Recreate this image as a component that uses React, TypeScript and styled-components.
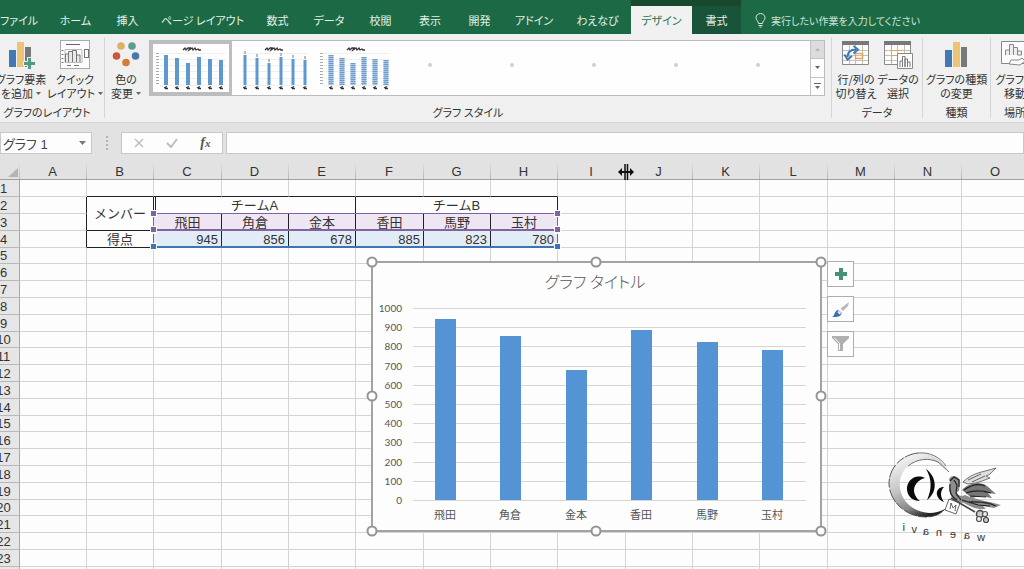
import React from "react";
import styled, { createGlobalStyle, css } from "styled-components";

const GlobalStyle = createGlobalStyle`
  *, *::before, *::after { box-sizing: border-box; }
  body {
    margin: 0;
    overflow: hidden;
    background: #fdfdfd;
    color: #333;
    font-family: "Noto Sans CJK JP", sans-serif;
    font-size: 11px;
  }
  button, input { font: inherit; color: inherit; border: 0; padding: 0; margin: 0; background: none; border-radius: 0; }
  svg { display: block; flex: none; }
`;

const Workbook = styled.div`
  display: flex;
  flex-direction: column;
  height: 100vh;
  overflow: hidden;
`;

/* ---------- tab strip ---------- */
const TabStrip = styled.nav`
  display: flex;
  flex: none;
  height: 34px;
  padding-right: 16px;
  background: #1c6a45;
  color: #e4f0e9;
  font-feature-settings: "palt";
  overflow: hidden;
`;

const Tab = styled.button<{ $w: number; $kind?: "active" | "context" }>`
  flex: none;
  width: ${(p) => p.$w}px;
  padding-top: 6px;
  line-height: 28px;
  white-space: nowrap;
  ${(p) => p.$kind === "context" && css`background: #19543a; border-top: 6px solid #18492f; padding-top: 0;`}
  ${(p) =>
    p.$kind === "active" &&
    css`background: #f1f1f1; color: #2a7350; border-top: 6px solid #18492f; padding-top: 0;`}
`;

const TellMe = styled.label`
  display: flex;
  flex: 1;
  align-items: center;
  gap: 5px;
  padding: 6px 0 0 14px;
`;

const TellMeInput = styled.input`
  flex: 1;
  min-width: 0;
  font-size: 10px;
  font-feature-settings: "palt";
  &::placeholder { color: #cfe3d8; opacity: 1; }
`;

/* ---------- ribbon ---------- */
const Ribbon = styled.section`
  display: flex;
  flex: none;
  height: 89px;
  padding: 4px 0;
  background: #f0f0f0;
  border-bottom: 1px solid #d2d2d2;
  font-feature-settings: "palt";
  overflow: hidden;
`;

const Group = styled.div<{ $w?: number; $first?: boolean }>`
  display: flex;
  flex-direction: column;
  flex: ${(p) => (p.$w ? "none" : "1 1 0")};
  width: ${(p) => (p.$w ? `${p.$w}px` : "auto")};
  min-width: 0;
  margin-left: ${(p) => (p.$first ? "-10px" : "0")};
  border-right: 1px solid #d4d4d4;
  &:last-child { border-right: 0; }
`;

const GroupBody = styled.div<{ $start?: boolean }>`
  display: flex;
  flex: 1;
  justify-content: ${(p) => (p.$start ? "flex-start" : "center")};
`;

const GroupLabel = styled.div<{ $w?: number }>`
  width: ${(p) => (p.$w ? `${p.$w}px` : "auto")};
  height: 12px;
  line-height: 12px;
  text-align: center;
  white-space: nowrap;
`;

const Command = styled.button<{ $w: number }>`
  display: flex;
  flex: none;
  flex-direction: column;
  align-items: center;
  width: ${(p) => p.$w}px;
  padding-top: 2px;
  line-height: 14px;
  white-space: nowrap;
`;

const CommandIcon = styled.span`
  display: block;
  height: 32px;
`;

const Line = styled.span`
  display: flex;
  align-items: center;
  gap: 3px;
`;

const Gallery = styled.div`
  display: flex;
  flex: 1;
  min-width: 0;
  height: 56px;
  margin: 2px 6px 0 2px;
  background: #fefefe;
  border: 1px solid #bcbcbc;
`;

const GalleryItems = styled.div`
  display: flex;
  flex: 1;
  min-width: 0;
  overflow: hidden;
`;

const StyleButton = styled.button<{ $selected?: boolean }>`
  flex: none;
  width: 82px;
  outline: ${(p) => (p.$selected ? "3px solid #bdbdbd" : "0")};
  outline-offset: -3px;
`;

const GalleryScroll = styled.div`
  display: flex;
  flex-direction: column;
  width: 14px;
  border-left: 1px solid #c4c4c4;
`;

const ScrollButton = styled.button<{ $off?: boolean }>`
  display: grid;
  flex: 1;
  place-items: center;
  background: ${(p) => (p.$off ? "#dcdcdc" : "#fefefe")};
  & + & { border-top: 1px solid #c4c4c4; }
`;

/* ---------- formula bar ---------- */
const FormulaBar = styled.div`
  display: flex;
  flex: none;
  align-items: flex-end;
  height: 31px;
  background: #e2e2e2;
`;

const Box = styled.div<{ $w?: number }>`
  display: flex;
  align-items: center;
  flex: ${(p) => (p.$w ? "none" : "1")};
  width: ${(p) => (p.$w ? `${p.$w}px` : "auto")};
  height: 22px;
  background: #fdfdfd;
  border: 1px solid #c8c8c8;
`;

const NameInput = styled.input`
  flex: 1;
  min-width: 0;
  padding-left: 2px;
  font-family: "Liberation Sans", "Noto Sans CJK JP", sans-serif;
  font-size: 13px;
  font-feature-settings: "palt";
  color: #444;
`;

const FormulaInput = styled.input`
  flex: 1;
  min-width: 0;
  padding: 0 4px;
`;

const DropButton = styled.button`
  display: grid;
  place-items: center;
  width: 18px;
  height: 20px;
`;

const Grip = styled.div`
  display: flex;
  flex-direction: column;
  align-items: center;
  justify-content: center;
  gap: 2px;
  width: 29px;
  height: 22px;
  i { width: 2px; height: 2px; background: #b4b4b4; }
`;

const BarButton = styled.button`
  display: grid;
  flex: 1;
  place-items: center;
  height: 20px;
`;

const Fx = styled.em`
  font: italic bold 14px/16px "Liberation Serif", serif;
  color: #555;
  small { font-size: 11px; }
`;

const Gap = styled.div`
  width: 3px;
`;

/* ---------- sheet ---------- */
const SheetArea = styled.main`
  position: relative;
  flex: 1;
  min-height: 0;
  overflow: hidden;
  background: #fdfdfd;
`;

const Sheet = styled.table`
  width: max-content;
  margin-left: -10px;
  border-collapse: separate;
  border-spacing: 0;
  font-family: "Liberation Sans", "Noto Sans CJK JP", sans-serif;
  font-size: 13px;
  line-height: 15px;
`;

const HeadCell = styled.th<{ $w: number }>`
  min-width: ${(p) => p.$w}px;
  height: 26px;
  padding: 11px 2px 0 0;
  background: linear-gradient(to bottom, #e2e2e2 0, #e2e2e2 8px, #b4b4b4 26px) right / 1px 100% no-repeat #e2e2e2;
  border-bottom: 1px solid #a0a0a0;
  font-weight: normal;
  line-height: 14px;
`;

const CornerMark = styled.svg`
  margin-left: auto;
`;

const Row = styled.tr`
  height: 17px;
  &:nth-child(5n) { height: 16px; }
`;

const RowHead = styled.th`
  padding: 1px 2px 0 0;
  background: #e6e6e6;
  border-right: 1px solid #a8a8a8;
  border-bottom: 1px solid #b8b8b8;
  font-weight: normal;
  line-height: 14px;
`;

const Cell = styled.td<{ $right?: boolean; $bottom?: boolean; $left?: boolean; $fill?: string; $num?: boolean }>`
  padding: ${(p) => (p.$num ? "1px 3px 0 0" : "1px 0 0")};
  line-height: 14px;
  text-align: ${(p) => (p.$num ? "right" : "center")};
  background: ${(p) => p.$fill || "transparent"};
  border: 0 solid #d4d4d4;
  border-width: 0 1px 1px 0;
  ${(p) => p.$right && css`border-right-color: #222;`}
  ${(p) => p.$bottom && css`border-bottom-color: #222;`}
  ${(p) => p.$left && css`box-shadow: inset 1px 0 #fdfdfd, inset 2px 0 #222;`}
`;

/* Coloured outlines that mark the source ranges of the chart. */
const Range = styled.div<{ $color: string; $top: number }>`
  position: absolute;
  left: 153px;
  top: ${(p) => p.$top}px;
  width: 405px;
  height: 18px;
  border: 1px solid ${(p) => p.$color};
  border-bottom-width: 2px;
  pointer-events: none;
  i {
    position: absolute;
    width: 5px;
    height: 5px;
    background: ${(p) => p.$color};
    outline: 1px solid #fdfdfd;
  }
  i:nth-child(1) { left: -3px; top: -3px; }
  i:nth-child(2) { right: -3px; top: -3px; }
  i:nth-child(3) { left: -3px; bottom: -3px; }
  i:nth-child(4) { right: -3px; bottom: -3px; }
`;

const ChartObject = styled.figure`
  position: absolute;
  left: 372px;
  top: 108px;
  margin: 0;
  svg { overflow: visible; }
`;

const ChartTools = styled.div`
  position: absolute;
  left: 827px;
  top: 107px;
  display: flex;
  flex-direction: column;
  gap: 9px;
`;

const ToolButton = styled.button`
  display: grid;
  place-items: center;
  width: 27px;
  height: 26px;
  background: #fdfdfd;
  border: 1px solid #adadad;
`;

const ResizeCursor = styled.svg`
  position: absolute;
  left: 618px;
  top: 10px;
`;

const Watermark = styled.svg`
  position: absolute;
  left: 884px;
  top: 294px;
`;

/* ---------- icons ---------- */
const Down = ({ color = "#666" }: { color?: string }) => (
  <svg width="5" height="3" viewBox="0 0 5 3"><path d="M0 0h5L2.500 3z" fill={color} /></svg>
);

const Columns = ({ plus }: { plus?: boolean }) => (
  <svg width="28" height="30" viewBox="0 0 28 30">
    <rect x="2" y="10" width="7" height="17" fill="#4179b4" />
    <rect x="10" y="2" width="7" height="25" fill="#edc376" />
    <rect x="18" y="7" width="6" height="20" fill="#787878" />
    {plus && (
      <path d="M20.500 17.500h4v4h4v4h-4v4h-4v-4h-4v-4h4z" fill="#4f9c86" stroke="#f0f0f0" strokeWidth="1" />
    )}
  </svg>
);

const QuickLayout = () => (
  <svg width="30" height="30" viewBox="0 0 30 30" fill="none" stroke="#777">
    <rect x=".5" y=".5" width="29" height="28" fill="#fcfcfc" stroke="#aaa" />
    <path d="M6 4.500h14" stroke="#666" />
    <path d="M2.500 10v13" strokeDasharray="1 3" strokeWidth="2" />
    <path d="M7 25.500h4M14 25.500h5" />
    <path d="M5 9.500h17v13H5z" stroke="#bbb" />
    <path d="M5.500 22v-8h3v8M8.500 22V11.500h4V22M12.500 22V10.500h4V22M16.500 22v-7h3.500v7" fill="#e9e9e9" />
    <rect x="24.500" y="9.500" width="4" height="8" />
  </svg>
);

const Palette = () => (
  <svg width="28" height="30" viewBox="0 0 28 30">
    <circle cx="9" cy="6" r="3.800" fill="#dfae6a" />
    <circle cx="20" cy="6" r="3.800" fill="#5d9d8d" />
    <circle cx="4.500" cy="16" r="3.800" fill="#c9593a" />
    <circle cx="23.500" cy="16" r="3.800" fill="#4f76a9" />
    <circle cx="14" cy="22.500" r="3.800" fill="#d67a35" />
  </svg>
);

const SheetGrid = ({ children }: { children: React.ReactNode }) => (
  <svg width="30" height="30" viewBox="0 0 30 30" fill="none">
    <path d="M1.500 1.500h26v23h-26z" fill="#fdfdfd" stroke="#8a8a8a" />
    <path d="M1 1h27v4H1z" fill="#777" />
    <path d="M2 10.500h25M2 15.500h25M2 20.500h25M8.500 5v19M14.500 5v19M21.500 5v19" stroke="#c8bfb2" />
    {children}
  </svg>
);

const SwitchRows = () => (
  <SheetGrid>
    <path d="M14.500 13.500h7v5h-7z" stroke="#dda866" strokeWidth="1.500" />
    <path d="M6.500 17C6.500 11.500 10 9.500 15 9.500" stroke="#3d78b8" strokeWidth="2" />
    <path d="M12.500 6l4.500 3.500-4.500 4M3.500 14.500l3 5 4.500-3.500" stroke="#3d78b8" strokeWidth="2" />
  </SheetGrid>
);

const SelectData = () => (
  <SheetGrid>
    <path d="M8.500 5v18M8.500 10.500h13M8.500 15.500h13" stroke="#dda866" />
    <path d="M14.500 13.500h15v15h-15z" fill="#fdfdfd" stroke="#888" />
    <path d="M17 27v-6h2.500v6M19.500 27V16.500H22V27M22 27v-8h2.500v8M24.500 27v-5H27v5" stroke="#777" />
  </SheetGrid>
);

const MoveChart = () => (
  <svg width="30" height="30" viewBox="0 0 30 30" fill="none" stroke="#888">
    <path d="M1.500 1.500h28v22h-28z" fill="#fdfdfd" />
    <path d="M5.500 15v-5h4v5M9.500 15V4.500h4V15M13.500 15V7.500h4V15M17.500 15v-4h4v4z" fill="#ececec" />
    <path d="M9 24l2-4h8l3-2 3 3-5 4z" fill="#fdfdfd" />
  </svg>
);

const thumbValues = [945, 856, 678, 885, 823, 780];

const Thumb = ({ kind }: { kind: "solid" | "thin" | "striped" | "dot" }) => {
  if (kind === "dot") {
    return <svg width="82" height="54"><circle cx="34" cy="24" r="2" fill="#cfcfcf" /></svg>;
  }
  const w = kind === "solid" ? 4 : kind === "thin" ? 3 : 5;
  const first = kind === "thin" ? 13 : kind === "striped" ? 17 : 16;
  const pitch = kind === "thin" ? 12 : 11;
  return (
    <svg width="82" height="54" viewBox="0 0 82 54">
      <path d="M10 12.500h66M10 18.500h66M10 24.500h66M10 30.500h66M10 37.500h66M10 44.500h66" stroke="#efefef" />
      {kind !== "thin" && <path d="M7.500 12v33" stroke="#aaa" strokeWidth="3" strokeDasharray="1 2" />}
      <path d="M33 9l2-2 1 2 2-2h2l-1 2 3-2 1 2 2-2 1 2 2-1 1 1h2" fill="none" stroke="#333" strokeWidth="1.300" />
      {thumbValues.map((v, i) => {
        const x = first + i * pitch;
        const h = Math.round(v * 0.032);
        return (
          <g key={i}>
            <rect x={x - w / 2} y={44 - h} width={w} height={h} fill={kind === "striped" ? "#a9c6e4" : "#5f97cf"} />
            {kind === "striped" && (
              <path d={`M${x} ${44 - h}v${h}`} stroke="#6f9cc9" strokeWidth={w} strokeDasharray="1 1" />
            )}
            {kind === "thin" && <path d={`M${x} ${40 - h}v3`} stroke="#777" />}
            <path d={`M${x - 2} 47l3-1.500M${x - 1} 47.500h3`} stroke="#333" strokeWidth="1.300" />
          </g>
        );
      })}
    </svg>
  );
};

/* ---------- chart ---------- */
const data = [
  { name: "飛田", value: 945 },
  { name: "角倉", value: 856 },
  { name: "金本", value: 678 },
  { name: "香田", value: 885 },
  { name: "馬野", value: 823 },
  { name: "玉村", value: 780 },
];

const plot = { left: 41, right: 434, top: 46, bottom: 238 };
const yOf = (v: number) => Math.round(plot.bottom - (v / 1000) * (plot.bottom - plot.top));
const step = (plot.right - plot.left) / data.length;

const ChartText = styled.text<{ $size: number }>`
  font-family: Lato, "Noto Sans CJK JP", sans-serif;
  font-size: ${(p) => p.$size}px;
  fill: #555;
`;

const TitleText = styled(ChartText)`
  font-family: "Noto Sans CJK JP", sans-serif;
  font-weight: 300;
  font-feature-settings: "palt";
`;

const Chart = () => (
  <svg width="449" height="269" role="img" aria-label="グラフ タイトル">
    <rect x="0" y="0" width="449" height="269" fill="#fdfdfd" stroke="#a3a3a3" strokeWidth="2" />
    <TitleText $size={16} x="223" y="26" textAnchor="middle">グラフ タイトル</TitleText>
    {Array.from({ length: 11 }, (_, i) => i * 100).map((v) => (
      <g key={v}>
        <path d={`M${plot.left} ${yOf(v)}.5H${plot.right}`} stroke="#d6d6d6" />
        <ChartText $size={10} x="30" y={yOf(v) + 4} textAnchor="end">{v}</ChartText>
      </g>
    ))}
    {data.map((d, i) => {
      const x = Math.round(plot.left + step * (i + 0.5));
      return (
        <g key={d.name}>
          <rect x={x - 11} y={yOf(d.value)} width="21" height={plot.bottom - yOf(d.value)} fill="#5494d5" />
          <ChartText $size={11} x={x - 1} y="257" textAnchor="middle">{d.name}</ChartText>
        </g>
      );
    })}
    {[0, 134, 269].map((y) =>
      [0, 224, 449].map((x) =>
        x === 224 && y === 134 ? null : (
          <circle key={`${x}-${y}`} cx={x} cy={y} r="4.500" fill="#fdfdfd" stroke="#949494" strokeWidth="2" />
        )
      )
    )}
  </svg>
);

/* ---------- sheet contents ---------- */
const letters = "ABCDEFGHIJKLMNO".split("");
const purple = "#efe6f4";
const blue = "#e2ecf6";

const Blank = ({ from, to, bottom }: { from: number; to: number; bottom?: boolean }) => (
  <>
    {letters.slice(from, to).map((l) => (
      <Cell key={l} $bottom={bottom} />
    ))}
  </>
);

const rowCells = (n: number) => {
  switch (n) {
    case 1:
      return (<><Blank from={0} to={1} /><Blank from={1} to={8} bottom /><Blank from={8} to={15} /></>);
    case 2:
      return (
        <>
          <Cell $right />
          <Cell rowSpan={2} $right $bottom>メンバー</Cell>
          <Cell colSpan={3} $left $right $bottom>チームA</Cell>
          <Cell colSpan={3} $right $bottom>チームB</Cell>
          <Blank from={8} to={15} />
        </>
      );
    case 3:
      return (
        <>
          <Cell $right />
          {data.map((d) => <Cell key={d.name} $right $bottom $fill={purple}>{d.name}</Cell>)}
          <Blank from={8} to={15} />
        </>
      );
    case 4:
      return (
        <>
          <Cell $right />
          <Cell $right $bottom>得点</Cell>
          {data.map((d) => <Cell key={d.name} $right $bottom $num $fill={blue}>{d.value}</Cell>)}
          <Blank from={8} to={15} />
        </>
      );
    default:
      return <Blank from={0} to={15} />;
  }
};

const tabs: [string, number, ("active" | "context")?][] = [
  ["ファイル", 48], ["ホーム", 55], ["挿入", 49], ["ページ レイアウト", 101], ["数式", 49],
  ["データ", 54], ["校閲", 49], ["表示", 50], ["開発", 49], ["アドイン", 60], ["わえなび", 67],
  ["デザイン", 61, "active"], ["書式", 49, "context"],
];

const FileTab = styled(Tab)`
  padding-right: 10px;
`;

export default function App() {
  return (
    <Workbook>
      <GlobalStyle />
      <TabStrip>
        {tabs.map(([name, w, kind], i) =>
          i === 0 ? <FileTab key={name} $w={w}>{name}</FileTab> : <Tab key={name} $w={w} $kind={kind}>{name}</Tab>
        )}
        <TellMe>
          <svg width="11" height="15" viewBox="0 0 11 15" fill="none" stroke="#d5e6dc">
            <path d="M3.500 10.500C3.500 8 1 7.500 1 4.800a4.500 4.300 0 0 1 9 0C10 7.500 7.500 8 7.500 10.500zM3.500 12.500h4M4.500 14h2" />
          </svg>
          <TellMeInput aria-label="操作アシスト" placeholder="実行したい作業を入力してください" />
        </TellMe>
      </TabStrip>

      <Ribbon>
        <Group $w={115} $first>
          <GroupBody>
            <Command $w={56}><CommandIcon><Columns plus /></CommandIcon><Line>グラフ要素</Line><Line>を追加<Down /></Line></Command>
            <Command $w={52}><CommandIcon><QuickLayout /></CommandIcon><Line>クイック</Line><Line>レイアウト<Down /></Line></Command>
          </GroupBody>
          <GroupLabel>グラフのレイアウト</GroupLabel>
        </Group>
        <Group>
          <GroupBody>
            <Command $w={42}><CommandIcon><Palette /></CommandIcon><Line>色の</Line><Line>変更<Down /></Line></Command>
            <Gallery>
              <GalleryItems>
                <StyleButton $selected aria-label="スタイル 1"><Thumb kind="solid" /></StyleButton>
                <StyleButton aria-label="スタイル 2"><Thumb kind="thin" /></StyleButton>
                <StyleButton aria-label="スタイル 3"><Thumb kind="striped" /></StyleButton>
                {[4, 5, 6, 7, 8].map((n) => (
                  <StyleButton key={n} aria-label={`スタイル ${n}`}><Thumb kind="dot" /></StyleButton>
                ))}
              </GalleryItems>
              <GalleryScroll>
                <ScrollButton $off aria-label="上へ"><svg width="5" height="3"><path d="M0 3h5L2.500 0z" fill="#b5b5b5" /></svg></ScrollButton>
                <ScrollButton aria-label="下へ"><Down /></ScrollButton>
                <ScrollButton aria-label="その他"><svg width="7" height="6"><path d="M0 .5h7" stroke="#666" /><path d="M1 3h5L3.500 6z" fill="#666" /></svg></ScrollButton>
              </GalleryScroll>
            </Gallery>
          </GroupBody>
          <GroupLabel>グラフ スタイル</GroupLabel>
        </Group>
        <Group $w={91}>
          <GroupBody>
            <Command $w={42}><CommandIcon><SwitchRows /></CommandIcon><Line>行/列の</Line><Line>切り替え</Line></Command>
            <Command $w={42}><CommandIcon><SelectData /></CommandIcon><Line>データの</Line><Line>選択</Line></Command>
          </GroupBody>
          <GroupLabel>データ</GroupLabel>
        </Group>
        <Group $w={68}>
          <GroupBody>
            <Command $w={60}><CommandIcon><Columns /></CommandIcon><Line>グラフの種類</Line><Line>の変更</Line></Command>
          </GroupBody>
          <GroupLabel>種類</GroupLabel>
        </Group>
        <Group $w={33}>
          <GroupBody $start>
            <Command $w={48}><CommandIcon><MoveChart /></CommandIcon><Line>グラフの</Line><Line>移動</Line></Command>
          </GroupBody>
          <GroupLabel $w={48}>場所</GroupLabel>
        </Group>
      </Ribbon>

      <FormulaBar>
        <Box $w={92}>
          <NameInput aria-label="名前ボックス" defaultValue="グラフ 1" />
          <DropButton aria-label="名前の一覧"><svg width="7" height="4"><path d="M0 0h7L3.500 4z" fill="#777" /></svg></DropButton>
        </Box>
        <Grip><i /><i /><i /><i /></Grip>
        <Box $w={102}>
          <BarButton aria-label="キャンセル"><svg width="10" height="10"><path d="M1 1l8 8M9 1L1 9" stroke="#bdbdbd" strokeWidth="1.500" /></svg></BarButton>
          <BarButton aria-label="入力"><svg width="12" height="10"><path d="M1 5l4 4 6-8" fill="none" stroke="#bdbdbd" strokeWidth="2" /></svg></BarButton>
          <BarButton aria-label="関数の挿入"><Fx>f<small>x</small></Fx></BarButton>
        </Box>
        <Gap />
        <Box><FormulaInput aria-label="数式バー" /></Box>
      </FormulaBar>

      <SheetArea>
        <Sheet>
          <thead>
            <tr>
              <HeadCell $w={30}><CornerMark width="10" height="9"><path d="M10 0v9H0z" fill="#b5b5b5" /></CornerMark></HeadCell>
              {letters.map((l, i) => <HeadCell key={l} $w={i % 3 === 2 ? 68 : 67}>{l}</HeadCell>)}
            </tr>
          </thead>
          <tbody>
            {Array.from({ length: 24 }, (_, i) => i + 1).map((n) => (
              <Row key={n}><RowHead>{n}</RowHead>{rowCells(n)}</Row>
            ))}
          </tbody>
        </Sheet>

        <Range $color="#3f73b5" $top={76}><i /><i /><i /><i /></Range>
        <Range $color="#8064a2" $top={59}><i /><i /><i /><i /></Range>

        <ChartObject><Chart /></ChartObject>
        <ChartTools>
          <ToolButton aria-label="グラフ要素">
            <svg width="14" height="14"><path d="M5 1h4v4h4v4H9v4H5V9H1V5h4z" fill="#459079" /></svg>
          </ToolButton>
          <ToolButton aria-label="グラフ スタイル">
            <svg width="18" height="17" viewBox="0 0 18 17">
              <path d="M17 1l-1 4-5 5-2.500-2.500z" fill="#b9b9b9" />
              <path d="M0 16c3-1 2-6 6-7l3.500 2.500C10 15 6 16.500 0 16z" fill="#3a6fae" />
              <path d="M6.500 9.500l3 2.500-2 1.500-2-2z" fill="#dfeaf5" />
            </svg>
          </ToolButton>
          <ToolButton aria-label="グラフ フィルター">
            <svg width="17" height="16" viewBox="0 0 17 16">
              <path d="M0 0h17v2l-6 6v7H6V8L0 2z" fill="#b0b0b0" />
              <path d="M2.500 2l5 5.500V14" fill="none" stroke="#fdfdfd" />
            </svg>
          </ToolButton>
        </ChartTools>

        <ResizeCursor width="16" height="16" viewBox="0 0 16 16" aria-hidden="true">
          <path d="M7 0v16M9.500 0v16" stroke="#111" strokeWidth="1.500" />
          <path d="M2 8h12" stroke="#111" strokeWidth="2" />
          <path d="M0 8l4-4v8zM16 8l-4-4v8z" fill="#111" />
        </ResizeCursor>

        <Watermark width="120" height="100" viewBox="0 0 120 100" role="img" aria-label="waenavi">
          <defs>
            <linearGradient id="moon" x1=".2" y1="0" x2=".6" y2="1">
              <stop offset="0" stopColor="#fafafa" />
              <stop offset=".5" stopColor="#c4c4c4" />
              <stop offset=".8" stopColor="#888" />
              <stop offset="1" stopColor="#222" />
            </linearGradient>
          </defs>
          <path d="M64 23C57 10 46 4 34 5C17 7 5 20 5 36C6 54 22 69 42 69C50 69 57 66 61 61C48 68 34 65 25 57C14 47 13 31 21 21C29 11 43 9 55 15z" fill="url(#moon)" />
          <path d="M34 5C17 7 5 20 5 36C6 54 22 69 42 69C50 69 57 66 61 61" fill="none" stroke="#444" strokeWidth=".9" strokeDasharray="14 1 9 2" />
          <path d="M24 18C34 10 46 10 54 14L65 24M34 5C46 4 56 9 62 18" fill="none" stroke="#666" strokeWidth=".9" />
          <path d="M41 30C31 25 22 33 23 42C24 49 29 53 36 53C27 46 28 34 41 30z" fill="#0b0b0b" />
          <path d="M42 21C53 29 54 44 43 52C48 41 48 31 42 21z" fill="#0b0b0b" />
          <path d="M60 39C51 39 50 50 60 54C56 49 56 43 60 39z" fill="#0b0b0b" />
          <path d="M65 31C67 27 73 27 76 32L75 43C70 44 75 50 81 47C92 52 105 53 117 57L110 60L99 58L102 61C92 62 85 58 80 55C70 54 63 48 66 34z" fill="#8c8c8c" />
          <path d="M79 34C89 24 100 24 112 20C108 24 106 27 102 28L106 30L98 33L92 35L84 36z" fill="#ddd" stroke="#555" strokeWidth=".8" />
          <path d="M78 42C84 36 94 32 103 38L112 46L104 45L108 50L96 48L88 50z" fill="#777" />
          <path d="M66 33l4-4 5 3v7M66 36c-1 8 1 13 7 16M70 32l3 5-1 8 5 7M80 42c7-5 14-7 21-4M82 45c8-3 16-3 25 0M86 48l16 1M78 52l16 5 12 1M84 54c9 0 18-1 28 4" fill="none" stroke="#222" strokeWidth="1.200" />
          <path d="M84 32l13-6M88 34l13-6M92 42l12 3M88 53l18 3M72 47l5 4" fill="none" stroke="#444" strokeWidth=".8" />
          <path d="M65 51l11 4-4 11-11-4zM66 61l1-6 2 5 3-3-1 6" fill="none" stroke="#555" strokeWidth=".9" />
          <path d="M67 50l24 14" fill="none" stroke="#444" strokeWidth="1.600" />
          <circle cx="96" cy="66" r="3.500" fill="#ccc" stroke="#444" strokeWidth="1.500" />
          <circle cx="101" cy="66" r="2.500" fill="#eee" stroke="#555" strokeWidth="1.200" />
          <circle cx="95" cy="71" r="2.500" fill="#eee" stroke="#555" strokeWidth="1.200" />
          <circle cx="102" cy="72" r="2.500" fill="#ccc" stroke="#444" strokeWidth="1.200" />
          <text
            transform="translate(120 0) scale(-1 1)"
            x="19 34 48 62 75 87 99"
            y="93 91 90 88 87 85 83"
            fontFamily="Liberation Sans, sans-serif"
            fontSize="11"
            fill="#333"
          >
            waenavi
          </text>
        </Watermark>
      </SheetArea>
    </Workbook>
  );
}
